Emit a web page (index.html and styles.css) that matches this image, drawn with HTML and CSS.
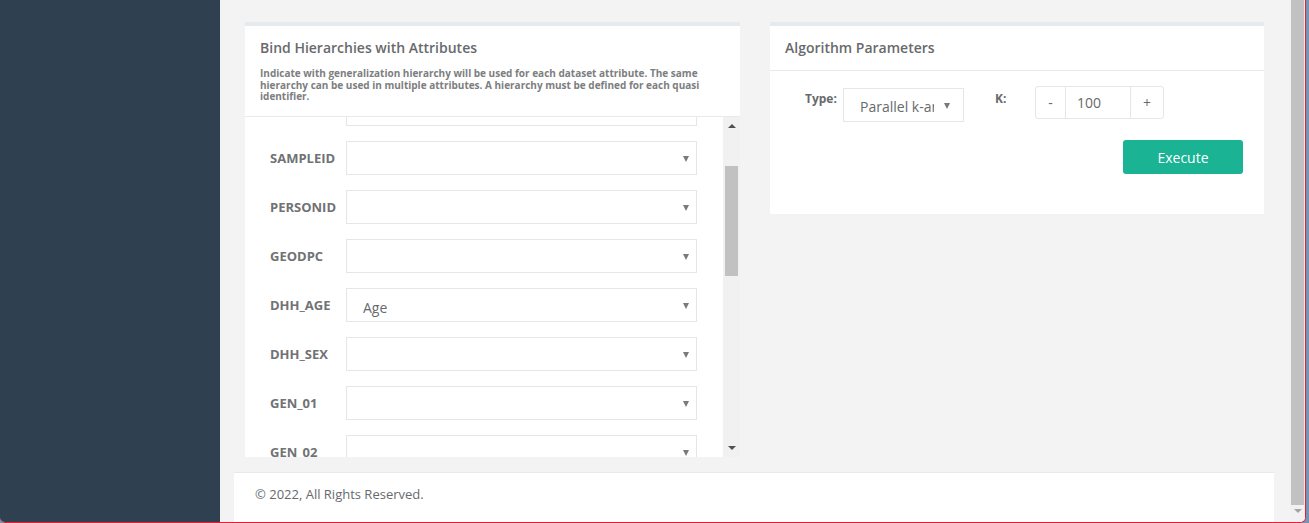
FILE: index.html
```html
<!DOCTYPE html>
<html lang="en">
<head>
<meta charset="utf-8">
<title>Bind Hierarchies</title>
<link rel="stylesheet" href="styles.css">
</head>
<body>
<div class="window">
  <aside class="sidebar"></aside>
  <div class="main">
    <div class="content">
      <div class="panels">
        <section class="panel panel-left">
          <div class="panel-head">
            <h5 class="panel-title">Bind Hierarchies with Attributes</h5>
            <p class="panel-desc">Indicate with generalization hierarchy will be used for each dataset attribute. The same hierarchy can be used in multiple attributes. A hierarchy must be defined for each quasi identifier.</p>
          </div>
          <div class="scroll-area">
            <div class="list-viewport">
              <div class="list">
                <div class="row"><span class="row-label"></span><div class="select"><span class="select-text"></span><span class="caret"></span></div></div>
                <div class="row"><span class="row-label">SAMPLEID</span><div class="select"><span class="select-text"></span><span class="caret"></span></div></div>
                <div class="row"><span class="row-label">PERSONID</span><div class="select"><span class="select-text"></span><span class="caret"></span></div></div>
                <div class="row"><span class="row-label">GEODPC</span><div class="select"><span class="select-text"></span><span class="caret"></span></div></div>
                <div class="row"><span class="row-label">DHH_AGE</span><div class="select"><span class="select-text">Age</span><span class="caret"></span></div></div>
                <div class="row"><span class="row-label">DHH_SEX</span><div class="select"><span class="select-text"></span><span class="caret"></span></div></div>
                <div class="row"><span class="row-label">GEN_01</span><div class="select"><span class="select-text"></span><span class="caret"></span></div></div>
                <div class="row"><span class="row-label">GEN_02</span><div class="select"><span class="select-text"></span><span class="caret"></span></div></div>
              </div>
            </div>
            <div class="vscroll">
              <span class="arrow-up"></span>
              <div class="vtrack"><div class="vthumb"></div></div>
              <span class="arrow-down"></span>
            </div>
          </div>
        </section>
        <section class="panel panel-right">
          <div class="panel-head panel-head-line">
            <h5 class="panel-title">Algorithm Parameters</h5>
          </div>
          <div class="params">
            <div class="param-row">
              <span class="param-label">Type:</span>
              <div class="select select-type"><span class="select-text">Parallel k-anonymity</span><span class="caret"></span></div>
              <span class="param-label param-k">K:</span>
              <div class="input-group">
                <span class="ig-btn ig-minus">-</span>
                <span class="ig-input">100</span>
                <span class="ig-btn ig-plus">+</span>
              </div>
            </div>
            <div class="action-row">
              <button class="btn-execute" type="button">Execute</button>
            </div>
          </div>
        </section>
      </div>
      <footer class="footer">© 2022, All Rights Reserved.</footer>
    </div>
    <div class="page-scroll">
      <div class="page-thumb"></div>
      <span class="page-arrow"></span>
    </div>
  </div>
</div>
</body>
</html>
```

FILE: styles.css
```css
* { box-sizing: border-box; }
html, body {
  margin: 0;
  padding: 0;
  width: 1309px;
  height: 523px;
  overflow: hidden;
  background: #7794b5;
  font-family: "Open Sans", "Noto Sans", sans-serif;
  color: #676a6c;
}
.window {
  width: 1306px;
  height: 523px;
  display: flex;
  border-right: 1px solid #e0203a;
  border-bottom: 1px solid #e0203a;
  border-bottom-left-radius: 5px;
  border-bottom-right-radius: 6px;
  overflow: hidden;
  background: #f3f3f4;
}
.sidebar {
  width: 220px;
  flex: none;
  background: #2f4050;
}
.main {
  flex: 1;
  display: flex;
  background: #f3f3f4;
}
.content {
  width: 1070px;
  flex: none;
  display: flex;
  flex-direction: column;
}
.panels {
  display: flex;
  gap: 30px;
  padding: 22px 0 0 25px;
  align-items: flex-start;
  height: 473px;
}
.panel {
  background: #fff;
  border-top: 4px solid #e7eaec;
}
.panel-left { width: 495px; }
.panel-right { width: 494px; }
.panel-head {
  padding: 12px 15px 0;
}
.panel-left .panel-head {
  height: 91px;
  border-bottom: 1px solid #e7eaec;
}
.panel-head-line {
  height: 45px;
  border-bottom: 1px solid #e7eaec;
}
.panel-title {
  margin: 0;
  font-size: 14px;
  font-weight: 600;
  line-height: 20px;
  color: #676a6c;
}
.panel-desc {
  margin: 10px 0 0;
  font-size: 10px;
  font-weight: 700;
  line-height: 11.5px;
  color: #7c7e80;
}
.scroll-area {
  display: flex;
  height: 340px;
  background: #f1f1f1;
}
.list-viewport {
  width: 478px;
  height: 340px;
  overflow: hidden;
  background: #fff;
}
.list {
  margin-top: -25px;
  padding-left: 25px;
}
.row {
  display: flex;
  align-items: center;
  height: 34px;
  margin-bottom: 15px;
}
.row-label {
  width: 76px;
  font-size: 13px;
  font-weight: 700;
  color: #707274;
  white-space: nowrap;
}
.select {
  width: 351px;
  height: 34px;
  border: 1px solid #e5e6e7;
  display: flex;
  align-items: center;
  padding: 0 7px 0 16px;
  background: #fff;
}
.select-text {
  flex: 1;
  min-width: 0;
  font-size: 14px;
  color: #676a6c;
  white-space: nowrap;
  overflow: hidden;
  padding-top: 4px;
}
.caret {
  flex: none;
  width: 0; height: 0;
  margin-left: 4px;
  margin-top: 2px;
  border-left: 3px solid transparent;
  border-right: 3px solid transparent;
  border-top: 6px solid #7a7a7a;
}
.vscroll {
  width: 17px;
  display: flex;
  flex-direction: column;
  align-items: center;
  background: #f1f1f1;
}
.arrow-up {
  margin-top: 7px;
  width: 0; height: 0;
  border-left: 4px solid transparent;
  border-right: 4px solid transparent;
  border-bottom: 4px solid #505050;
}
.vtrack {
  flex: 1;
  width: 100%;
  padding: 38px 2px 0;
}
.vthumb {
  height: 110px;
  background: #c1c1c1;
}
.arrow-down {
  margin-bottom: 7px;
  width: 0; height: 0;
  border-left: 4px solid transparent;
  border-right: 4px solid transparent;
  border-top: 4px solid #505050;
}
.params {
  padding: 15px 21px 40px 35px;
}
.param-row {
  display: flex;
  align-items: flex-start;
}
.param-label {
  font-size: 12px;
  font-weight: 700;
  color: #676a6c;
  line-height: 16px;
  margin-top: 5px;
  width: 38px;
}
.param-k {
  margin-left: 31px;
  width: 40px;
}
.select-type {
  width: 121px;
  margin-top: 2px;
  padding: 0 13px 0 16px;
}
.select-type .select-text { padding-top: 2px; }
.select-type .caret { margin-left: 10px; }
.input-group {
  display: flex;
  height: 33px;
  border: 1px solid #e5e6e7;
  border-radius: 3px;
  font-size: 14px;
  color: #676a6c;
}
.ig-btn, .ig-input {
  display: flex;
  align-items: center;
  justify-content: center;
}
.ig-minus { width: 30px; border-right: 1px solid #e5e6e7; }
.ig-input { width: 65px; justify-content: flex-start; padding-left: 11px; border-right: 1px solid #e5e6e7; }
.ig-plus { width: 32px; }
.action-row {
  display: flex;
  justify-content: flex-end;
  margin-top: 18px;
}
.btn-execute {
  width: 120px;
  height: 34px;
  background: #1ab394;
  border: none;
  border-radius: 3px;
  color: #fff;
  font-family: "Open Sans", "Noto Sans", sans-serif;
  font-size: 14px;
  padding: 0;
}
.footer {
  margin-left: 14px;
  width: 1040px;
  height: 50px;
  background: #fff;
  border-top: 1px solid #e7eaec;
  padding: 11px 21px;
  font-size: 13px;
  line-height: 20px;
  color: #676a6c;
}
.page-scroll {
  width: 15px;
  flex: none;
  background: #f1f1f1;
  display: flex;
  flex-direction: column;
  align-items: center;
  padding: 0 1px;
}
.page-thumb {
  width: 13px;
  height: 505px;
  background: #c1c1c1;
}
.page-arrow {
  margin-top: 4px;
  width: 0; height: 0;
  border-left: 4px solid transparent;
  border-right: 4px solid transparent;
  border-top: 4px solid #a3a3a3;
}
```
